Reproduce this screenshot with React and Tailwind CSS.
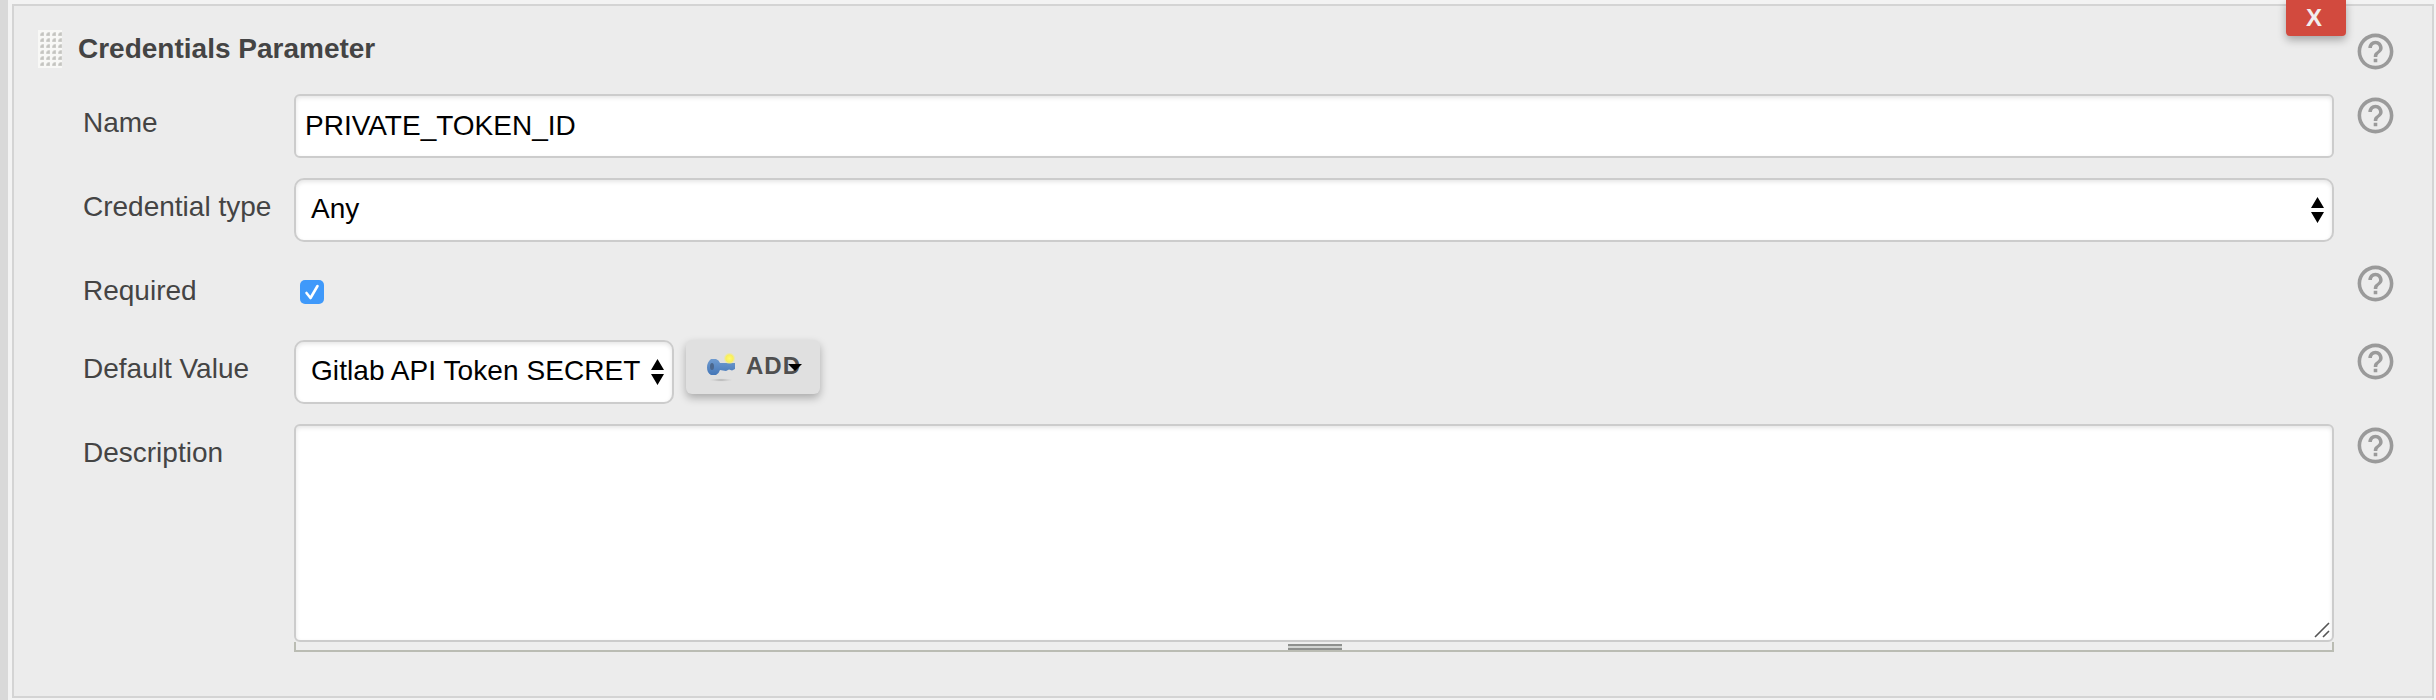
import { MdHelpOutline } from "react-icons/md";

const inset = "shadow-[inset_0_2px_4px_rgba(0,0,0,0.1)]";

function Label({ children }) {
  return (
    <div className="mt-[13px] w-[211px] shrink-0 whitespace-nowrap text-[28px] leading-8 text-[#444]">
      {children}
    </div>
  );
}

function Help({ className = "" }) {
  return (
    <div className={`flex w-[82px] shrink-0 justify-center ${className}`}>
      <MdHelpOutline className="size-[43px] text-[#9a9a9a]" />
    </div>
  );
}

function Arrows() {
  return (
    <svg viewBox="0 0 13 26" className="h-[26px] w-[13px] shrink-0">
      <path d="M6.500 0L13 11H0zM6.500 26L13 15H0z" fill="#000" />
    </svg>
  );
}

function Grip() {
  return (
    <svg viewBox="0 0 24 38" className="h-[38px] w-6">
      <defs>
        <pattern id="dots" width="6" height="6" patternUnits="userSpaceOnUse">
          <rect width="6" height="6" fill="#f8f8f6" />
          <path d="M2 6V4L4 2H6V6Z" fill="#d6d6d3" />
          <path d="M3 5.500V4L4 3H5.500V5.500Z" fill="#c4c4c0" />
        </pattern>
      </defs>
      <rect width="24" height="38" fill="url(#dots)" />
    </svg>
  );
}

function KeyIcon() {
  return (
    <svg viewBox="0 0 32 30" className="h-[30px] w-8 shrink-0">
      <defs>
        <radialGradient id="glow">
          <stop offset="0" stopColor="#fffb70" />
          <stop offset="0.6" stopColor="#f8ee5c" />
          <stop offset="1" stopColor="#f4ee80" stopOpacity="0" />
        </radialGradient>
        <radialGradient id="shade">
          <stop offset="0" stopColor="#aaa" />
          <stop offset="1" stopColor="#ccc" stopOpacity="0" />
        </radialGradient>
        <linearGradient id="steel" x1="0" y1="0" x2="0" y2="1">
          <stop offset="0" stopColor="#6f9bd0" />
          <stop offset="1" stopColor="#4577b8" />
        </linearGradient>
      </defs>
      <ellipse cx="16" cy="28" rx="12" ry="1.800" fill="url(#shade)" />
      <path d="M6 7h5q3 1 4 4h15v6l-3 1.500-3-1-3 1.500-6-1q-1 3.500-4 5H6q-4-2-4-7.500t4-8.500z" fill="url(#steel)" />
      <ellipse cx="7" cy="14.500" rx="2" ry="3.500" fill="#4b678d" />
      <circle cx="24.500" cy="6.500" r="6" fill="url(#glow)" />
    </svg>
  );
}

export default function App() {
  return (
    <div className="flex h-[700px] w-[2436px] overflow-hidden bg-[#f3f3f3] font-['Liberation_Sans',Arial,sans-serif]">
      <div className="w-2 shrink-0 bg-[#d9d9d9]" />
      <div className="mt-1 ml-1 h-[694px] w-[2422px] border-2 border-[#d4d4d4] bg-[#ececec]">
        <div className="flex h-[88px] items-start">
          <div className="mt-6 ml-6">
            <Grip />
          </div>
          <h1 className="mt-[27px] ml-4 grow whitespace-nowrap text-[28px] leading-8 font-bold text-[#444]">
            Credentials Parameter
          </h1>
          <button className="-mt-1.5 -mr-3 h-9 w-[60px] shrink-0 rounded-b bg-[#d24a3e] pr-1 text-2xl leading-9 font-bold text-[#f1eeee] shadow-[0_4px_8px_rgba(0,0,0,0.3)]">
            X
          </button>
          <Help className="mt-[24px] mr-[16px]" />
        </div>
        <div className="pr-[16px] pl-[69px]">
          <div className="flex h-[84px] items-start">
            <Label>Name</Label>
            <div className={`flex h-16 grow items-center rounded-md border-2 border-[#ccc] bg-white pl-[9px] text-[28px] text-black ${inset}`}>
              PRIVATE_TOKEN_ID
            </div>
            <Help />
          </div>
          <div className="flex h-[84px] items-start">
            <Label>Credential type</Label>
            <div className={`flex h-16 grow items-center justify-between rounded-[10px] border-2 border-[#ccc] bg-white pr-2 pl-[15px] text-[28px] text-black ${inset}`}>
              <span className="pb-[3px]">Any</span>
              <Arrows />
            </div>
            <div className="w-[82px] shrink-0" />
          </div>
          <div className="flex h-[78px] items-start">
            <Label>Required</Label>
            <div className="grow pt-[18px] pl-[6px]">
              <svg viewBox="0 0 24 24" className="size-6">
                <rect width="24" height="24" rx="5" fill="#3f99fa" />
                <path d="M6.500 13l4 5 7-12" fill="none" stroke="#fff" strokeWidth="2.600" strokeLinecap="round" strokeLinejoin="round" />
              </svg>
            </div>
            <Help />
          </div>
          <div className="flex h-[84px] items-start">
            <Label>Default Value</Label>
            <div className="flex grow">
              <div className={`flex h-16 w-[380px] items-center justify-between rounded-[10px] border-2 border-[#ccc] bg-white pr-2 pl-[15px] text-[28px] tracking-[0.07px] whitespace-nowrap text-black ${inset}`}>
                <span className="pb-[3px]">Gitlab API Token SECRET</span>
                <Arrows />
              </div>
              <button className="relative ml-3 flex h-[54px] w-[134px] items-center rounded-md bg-[#e0e0e0] pl-[19px] text-2xl font-bold text-[#4f4f4f] shadow-[0_4px_8px_rgba(0,0,0,0.28)]">
                <KeyIcon />
                <span className="ml-[9px] pb-0.5 tracking-[1px]">ADD</span>
                <svg viewBox="0 0 14 7" className="absolute top-6 left-[102px] h-[7px] w-3.5">
                  <path d="M0 0H14L7 7z" fill="#000" />
                </svg>
              </button>
            </div>
            <Help />
          </div>
          <div className="flex items-start">
            <Label>Description</Label>
            <div className="grow">
              <div className={`flex h-[218px] items-end justify-end rounded-md border-2 border-[#ccc] bg-white pr-0.5 pb-0.5 ${inset}`}>
                <svg viewBox="0 0 16 16" className="size-4">
                  <path d="M1 15L15 1M9 15L15 9" stroke="#555" strokeWidth="1.600" />
                </svg>
              </div>
              <div className="flex h-2.5 items-end justify-center border-x-2 border-b-2 border-[#babcb3] bg-[#eee] pl-0.5">
                <div className="h-1.5 w-[54px] border-y-2 border-[#8e908e] bg-[#d2d4d2]" />
              </div>
            </div>
            <Help />
          </div>
        </div>
      </div>
    </div>
  );
}
